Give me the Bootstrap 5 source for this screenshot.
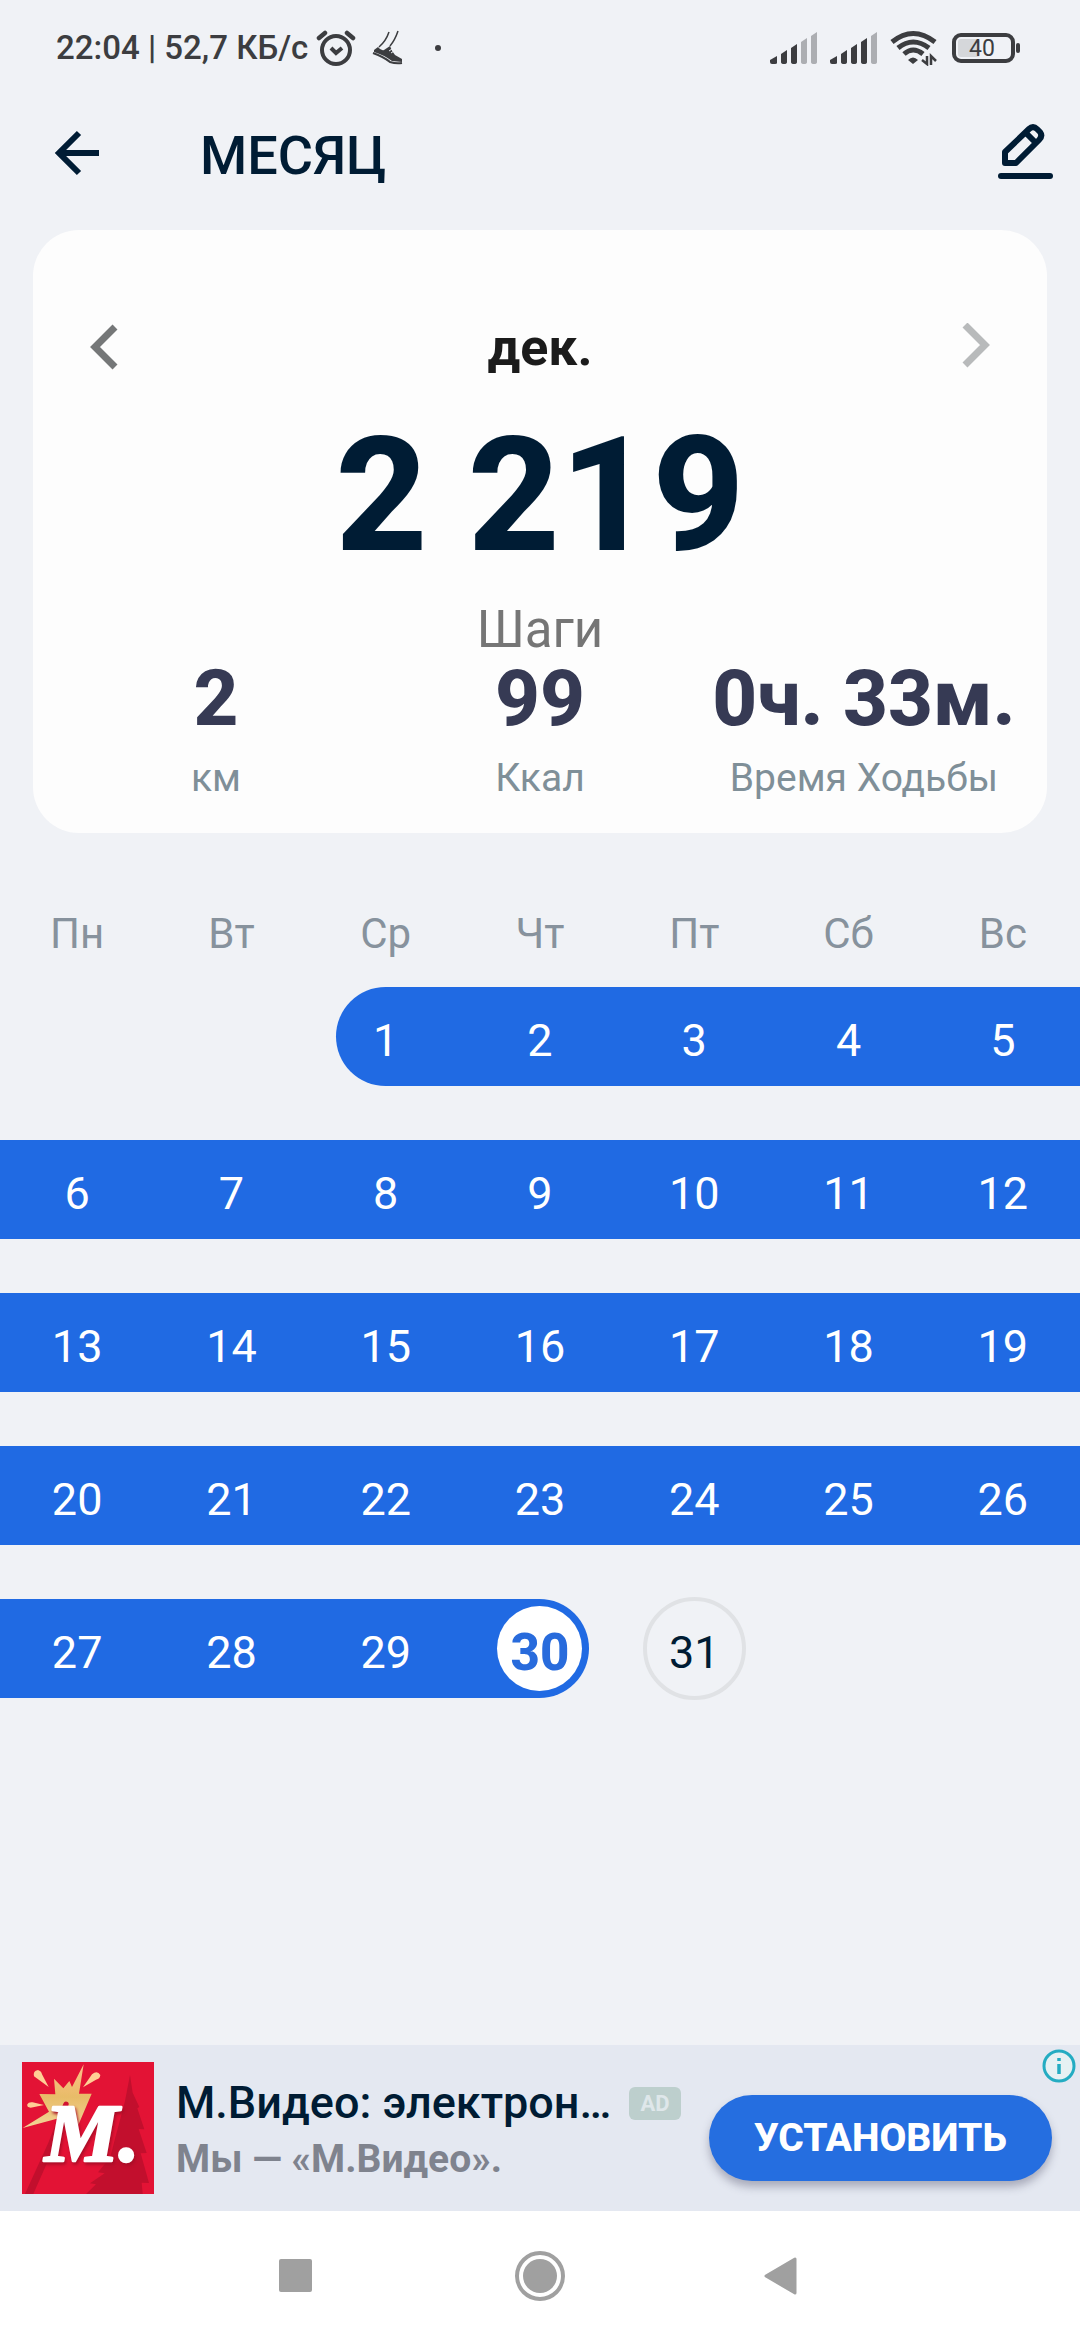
<!DOCTYPE html>
<html lang="ru">
<head>
<meta charset="utf-8">
<meta name="viewport" content="width=device-width, initial-scale=1">
<title>Месяц</title>
<link href="https://cdn.jsdelivr.net/npm/bootstrap@5.3.0/dist/css/bootstrap.min.css" rel="stylesheet">
<style>
  body { background: #f0f2f6; color: #001c34; font-family: Roboto, "Liberation Sans", sans-serif; }
  svg { display: block; flex: none; }
  .statusbar { height: 96px; padding: 0 60px 0 56px; color: #3c3d40; font-size: 33px; line-height: 40px; font-weight: 500; }
  .status-left { gap: 8px; }
  .status-right { gap: 12px; }
  .topbar { height: 120px; padding: 0 24px 0 46px; }
  .plain { background: none; border: 0; padding: 0; color: inherit; }
  .page-title { font-size: 54px; line-height: 64px; margin: 0 0 0 90px; font-weight: 500; }
  .summary { margin: 14px 33px 0; padding: 78px 21px 31px; background: #fdfdfd; border: 0; border-radius: 46px; }
  .month-row { height: 80px; padding: 0 26px; }
  .month-name { font-size: 52px; line-height: 60px; color: #1b1b1b; }
  .total { font-size: 160px; line-height: 160px; margin-top: 28px; font-weight: 800; }
  .total-label { font-size: 51px; line-height: 60px; margin-top: 24px; color: #757575; }
  .stat { font-size: 78px; line-height: 78px; font-weight: 800; color: #363a54; }
  .stat-label { font-size: 39px; line-height: 48px; margin-top: 16px; color: #7f8f98; }
  .calendar { table-layout: fixed; margin-top: 75px; text-align: center; }
  .calendar th { font-size: 42px; line-height: 52px; font-weight: 400; color: #87929d; padding: 0 0 27px; }
  .calendar td { padding: 0 0 54px; vertical-align: top; }
  .day { height: 99px; padding-top: 9px; font-size: 45px; }
  .done { background: #206ae3; color: #fff; }
  .first { margin-left: calc(50% - 50px); padding-right: calc(50% - 50px); border-radius: 50px 0 0 50px; }
  .today { position: relative; z-index: 0; margin-right: calc(50% - 49px); padding-left: calc(50% - 49px); border-radius: 0 50px 50px 0; font-size: 51px; font-weight: 800; color: #286bdc; }
  .today::before { content: ""; position: absolute; z-index: -1; right: 7px; top: 7px; width: 85px; height: 85px; border-radius: 50%; background: #fff; }
  .future { width: 103px; height: 103px; margin: -2px auto; border: 4px solid #e0e2e5; border-radius: 50%; }
  .ad { height: 166px; padding: 0 28px 0 22px; background: #e4e8f1; }
  .ad-copy { margin: 6px 28px 0 22px; min-width: 0; }
  .ad-title { font-size: 45px; line-height: 56px; font-weight: 500; }
  .ad-text { font-size: 39px; line-height: 56px; font-weight: 700; color: #7f838e; }
  .ad-tag { width: 52px; height: 33px; border-radius: 6px; background: #bdcfcd; color: #dfe7ea; font-size: 22px; line-height: 33px; font-weight: 700; text-align: center; }
  .install { width: 343px; height: 86px; margin-top: 20px; border: 0; border-radius: 43px; background: #256ee0; color: #fff; font-size: 39px; font-weight: 800; box-shadow: 0 6px 8px rgba(60, 60, 90, .35); }
  .ad-info { position: absolute; right: 4px; top: 4px; }
  .logo-letter { filter: drop-shadow(4px 7px 4px #a80d26); }
  .sysnav { height: 129px; gap: 144px; background: #fff; }
  .sysnav .plain { width: 100px; display: flex; justify-content: center; }
</style>
</head>
<body>
<div class="d-flex flex-column min-vh-100">
  <div class="statusbar d-flex align-items-center justify-content-between">
    <div class="status-left d-flex align-items-center">
      <span>22:04 | 52,7 КБ/с</span>
      <svg width="40" height="36" viewBox="0 0 40 36" fill="none" stroke="#3c3d40" stroke-width="4" stroke-linecap="round"><circle cx="20" cy="20" r="14"/><path d="M3 8 9 3M31 3 37 8" stroke-width="4.500"/><path d="m15 18 5 5 6-5" stroke-linecap="butt"/></svg>
      <svg class="ms-2" width="32" height="36" viewBox="0 0 32 36" fill="#3c3d40"><path d="M17 2Q14 11 7 17M26 1Q23 10 18 16" fill="none" stroke="#3c3d40" stroke-width="1.500"/><path d="M2 20 6 17Q9 21 12 20L18 16Q20 22 23 25L30 29V32L20 31Q12 25 2 22Z"/><path d="M1 23Q12 27 18 32 24 34 30 33" fill="none" stroke="#3c3d40" stroke-width="2"/><path d="m17 21 3-2m-1 4 3-2" stroke="#f0f2f6" stroke-width="1"/></svg>
      <svg class="ms-3" width="18" height="36" viewBox="0 0 18 36"><circle cx="10" cy="18" r="3" fill="#3c3d40"/></svg>
    </div>
    <div class="status-right d-flex align-items-center">
      <svg width="48" height="32" viewBox="0 0 48 32" fill="#3c3d40"><path d="M0 28 7 24V31Q7 32 5 32H2Q0 32 0 30ZM11 22 17 18V30Q17 32 14 32T11 30ZM21 16 27 12V30Q27 32 24 32T21 30Z"/><path fill="#acaeb2" d="M31 10 37 6V30Q37 32 34 32T31 30ZM41 4 47 0V30Q47 32 44 32T41 30Z"/></svg>
      <svg width="48" height="32" viewBox="0 0 48 32" fill="#3c3d40"><path d="M0 28 7 24V31Q7 32 5 32H2Q0 32 0 30ZM11 22 17 18V30Q17 32 14 32T11 30ZM21 16 27 12V30Q27 32 24 32T21 30ZM31 10 37 6V30Q37 32 34 32T31 30Z"/><path fill="#acaeb2" d="M41 4 47 0V30Q47 32 44 32T41 30Z"/></svg>
      <svg width="48" height="36" viewBox="0 0 48 36" fill="none" stroke="#3c3d40" stroke-width="5"><path d="M2 12Q23-5 45 12M8 18Q23 6 39 18M14 24Q23 16 33 24"/><path d="M18 30Q23 25 28 30L23 34Z" fill="#3c3d40" stroke="none"/><path d="M37 26V34L32 30M41 35V26L46 31" stroke-width="2.500"/></svg>
      <svg width="70" height="32" viewBox="0 0 70 32"><rect x="8" y="7" width="22" height="18" rx="3" fill="#d5d7da"/><rect x="4" y="3" width="59" height="26" rx="7" fill="none" stroke="#3c3d40" stroke-width="4"/><rect x="66" y="11" width="4" height="10" rx="2" fill="#3c3d40"/><text x="32" y="24" text-anchor="middle" font-family="Roboto, sans-serif" font-size="23" font-weight="400" fill="#3c3d40">40</text></svg>
    </div>
  </div>

  <header class="topbar d-flex align-items-center">
    <button class="plain" type="button" aria-label="Назад"><svg width="64" height="64" viewBox="0 0 64 64" fill="none" stroke="#001c34" stroke-width="6"><path d="M53 29H15M33 9 13 29 33 49"/></svg></button>
    <h1 class="page-title">МЕСЯЦ</h1>
    <button class="plain ms-auto" type="button" aria-label="Изменить"><svg width="60" height="64" viewBox="0 0 60 64" fill="none" stroke="#001c34" stroke-width="6" stroke-linejoin="round" stroke-linecap="round"><path d="M9 39V28L33 5Q37 1 41 5L44 8Q47 12 43 16L20 39ZM30 9 40 19"/><path d="M5 52H54"/></svg></button>
  </header>

  <section class="summary card text-center">
    <div class="month-row d-flex align-items-center justify-content-between">
      <button class="plain" type="button" aria-label="Предыдущий месяц"><svg width="50" height="50" viewBox="0 0 50 50" fill="none" stroke="#757778" stroke-width="7"><path d="M35 4 15 24 35 44"/></svg></button>
      <strong class="month-name">дек.</strong>
      <button class="plain" type="button" aria-label="Следующий месяц"><svg width="50" height="50" viewBox="0 0 50 50" fill="none" stroke="#b8babb" stroke-width="7"><path d="M15 2 35 22 15 42"/></svg></button>
    </div>
    <div class="total">2 219</div>
    <div class="total-label">Шаги</div>
    <div class="row g-0 text-nowrap">
      <div class="col-4"><div class="stat">2</div><div class="stat-label">км</div></div>
      <div class="col-4"><div class="stat">99</div><div class="stat-label">Ккал</div></div>
      <div class="col-4"><div class="stat">0ч. 33м.</div><div class="stat-label">Время Ходьбы</div></div>
    </div>
  </section>

  <table class="calendar w-100">
    <thead><tr><th scope="col">Пн</th><th scope="col">Вт</th><th scope="col">Ср</th><th scope="col">Чт</th><th scope="col">Пт</th><th scope="col">Сб</th><th scope="col">Вс</th></tr></thead>
    <tbody id="days"></tbody>
  </table>

  <aside class="ad d-flex align-items-center position-relative mt-auto">
    <svg width="132" height="132" viewBox="36 33 396 396" role="img" aria-label="М.Видео">
      <defs><linearGradient id="gold" x1="0" y1="0" x2="0" y2="1"><stop offset="0" stop-color="#ffc08a"/><stop offset=".5" stop-color="#e8bc68"/><stop offset="1" stop-color="#f3d79a"/></linearGradient></defs>
      <path fill="#e31335" d="M36 33H432V429H36Z"/>
      <path fill="#c20f2d" d="M360 72 368 125 388 168 382 172 403 235 386 234 410 306 392 307 417 396 395 395 398 429H228L258 400 240 397 284 367 264 364 300 320 345 150ZM45 429 115 275 160 160 178 162 140 270 70 429Z"/>
      <path fill="url(#gold)" d="M221 40 207 128 245 128 205 222 180 208 168 236 160 198 38 231 117 182 88 129 136 130 132 83 160 112 178 90 186 108Z"/>
      <path fill="#ffcf95" d="M116 108 72 76Q68 60 84 57 94 60 96 70ZM219 109 246 70Q262 57 271 72 270 84 258 86ZM102 162 62 170Q50 170 52 160 56 152 68 154Z"/>
      <path d="M168 160 140 228" stroke="#d21230" stroke-width="16" stroke-linecap="round"/>
      <text class="logo-letter" x="104" y="330" font-family="Liberation Serif, serif" font-size="250" font-weight="700" font-style="italic" fill="#fff" stroke="#fff" stroke-width="8" stroke-linejoin="round">М.</text>
    </svg>
    <div class="ad-copy flex-grow-1">
      <div class="d-flex align-items-center justify-content-between">
        <div class="ad-title text-nowrap">М.Видео: электрон…</div>
        <span class="ad-tag flex-shrink-0">AD</span>
      </div>
      <div class="ad-text text-nowrap">Мы — «М.Видео».</div>
    </div>
    <button class="install flex-shrink-0" type="button">УСТАНОВИТЬ</button>
    <a class="ad-info" href="#" aria-label="О рекламе"><svg width="34" height="34" viewBox="0 0 34 34"><circle cx="17" cy="17" r="15" fill="#e6f1f3" stroke="#24acc2" stroke-width="3"/><path d="M17 15V25M17 9V12" stroke="#24acc2" stroke-width="3.500"/></svg></a>
  </aside>

  <nav class="sysnav d-flex align-items-center justify-content-center" aria-label="Система">
    <button class="plain" type="button" aria-label="Недавние"><svg width="34" height="50" viewBox="0 0 34 50"><rect y="8" width="33" height="33" rx="2" fill="#a0a0a0"/></svg></button>
    <button class="plain" type="button" aria-label="Домой"><svg width="52" height="52" viewBox="0 0 52 52"><circle cx="26" cy="26" r="23" fill="none" stroke="#a0a0a0" stroke-width="4"/><circle cx="26" cy="26" r="17" fill="#a0a0a0"/></svg></button>
    <button class="plain" type="button" aria-label="Назад"><svg width="40" height="50" viewBox="0 0 40 50"><path d="M2 25 31 8V42Z" fill="#a0a0a0" stroke="#a0a0a0" stroke-width="3" stroke-linejoin="round"/></svg></button>
  </nav>
</div>
<script>
  // December starts on a Wednesday; today is the 30th.
  const startCol = 2, total = 31, today = 30;
  let html = '';
  for (let week = 0; week < 5; week++) {
    html += '<tr>';
    for (let col = 0; col < 7; col++) {
      const n = week * 7 + col - startCol + 1;
      if (n < 1 || n > total) { html += '<td></td>'; continue; }
      const kind = n > today ? 'future' : 'done' + (n === 1 ? ' first' : '') + (n === today ? ' today' : '');
      html += `<td><div class="day d-flex align-items-center justify-content-center ${kind}">${n}</div></td>`;
    }
    html += '</tr>';
  }
  document.getElementById('days').innerHTML = html;
</script>
<script src="https://cdn.jsdelivr.net/npm/bootstrap@5.3.0/dist/js/bootstrap.bundle.min.js"></script>
</body>
</html>
